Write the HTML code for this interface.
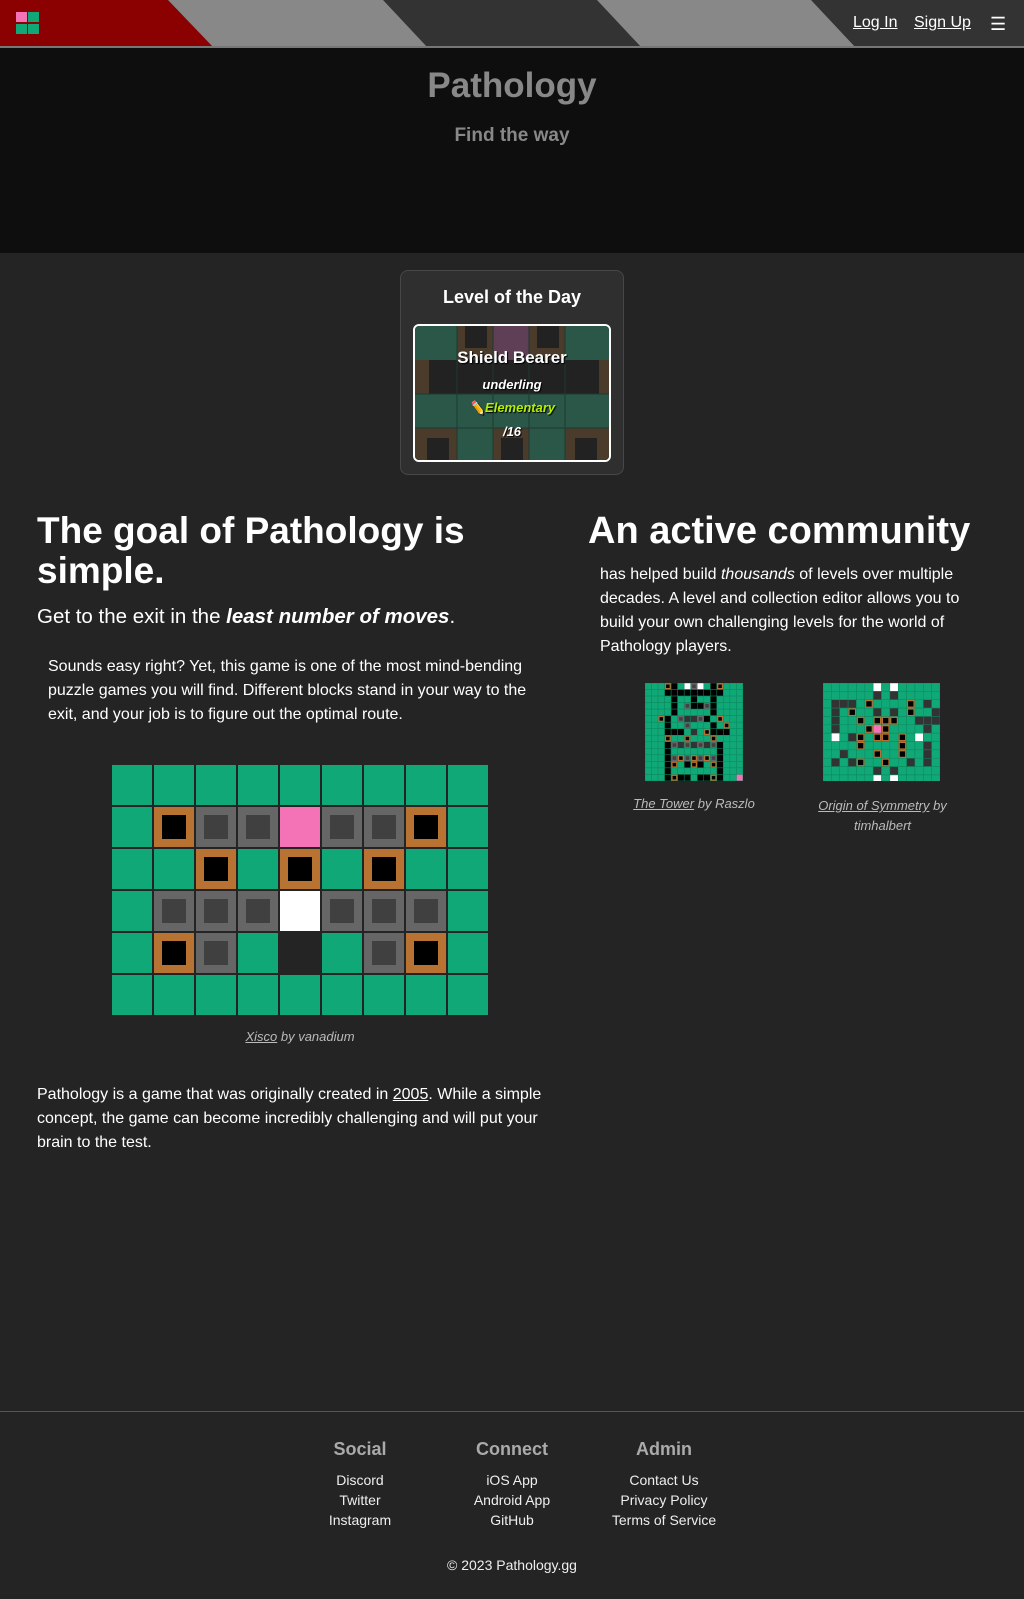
<!DOCTYPE html>
<html><head><meta charset="utf-8">
<style>
*{box-sizing:border-box;margin:0;padding:0}
body{width:1024px;height:1599px;background:#242424;font-family:"Liberation Sans",sans-serif;color:#fff;position:relative;overflow:hidden}
.hdr{position:absolute;left:0;top:0;width:1024px;height:48px;background:#333;border-bottom:2px solid #777;overflow:hidden}
.hero{position:absolute;top:48px;left:0;width:1024px;height:205px;background:#0e0e0e;text-align:center}
.abs{position:absolute}
a{color:inherit}
.card{position:absolute;left:400px;top:270px;width:224px;height:205px;background:#2f2f2f;border:1px solid #474747;border-radius:8px}
.prev{position:absolute;left:12px;top:53px;width:198px;height:138px;border:2px solid #fff;border-radius:6px;overflow:hidden;background:#2a5748}
.t{position:absolute;left:0;width:100%;text-align:center;font-weight:bold;font-style:italic;text-shadow:1px 1px 1px #000}
h2{font-size:37px;font-weight:bold;line-height:40px}
p.b{font-size:16px;line-height:24px}
.grid{position:absolute;left:112px;top:765px;display:grid;grid-template-columns:repeat(9,40px);grid-auto-rows:40px;gap:2px}
.c{width:40px;height:40px}
.g{background:#10a876}
.o{background:#000;border:8px solid #b87333}
.x{background:#404040;border:8px solid #666}
.p{background:#f472b6}
.w{background:#fff}
.e{background:#242424}
.cap{position:absolute;font-size:13px;font-style:italic;color:#bbb;text-align:center}
.ft{position:absolute;top:1411px;left:0;width:1024px;height:188px;border-top:1px solid #555}
.col{position:absolute;width:200px;text-align:center;top:27px}
.col h4{font-size:18px;color:#aaa;margin-bottom:10px}
.col div{font-size:14px;line-height:20px;color:#eee}
</style></head><body>
<div class="hdr">
<svg class="abs" style="left:0;top:0" width="1024" height="48">
<polygon points="0,0 168,0 214,48 0,48" fill="#8b0000"/>
<polygon points="168,0 383,0 428,48 214,48" fill="#888"/>
<polygon points="597,0 811,0 856,48 642,48" fill="#888"/>
<rect x="16" y="12" width="11" height="10" fill="#f472b6"/><rect x="28" y="12" width="11" height="10" fill="#10a876"/>
<rect x="16" y="24" width="11" height="10" fill="#10a876"/><rect x="28" y="24" width="11" height="10" fill="#10a876"/>
</svg>
<a class="abs" style="left:853px;top:14px;font-size:16px;text-decoration:underline">Log In</a>
<a class="abs" style="left:914px;top:14px;font-size:16px;text-decoration:underline">Sign Up</a>
<div class="abs" style="left:990px;top:14px;font-size:18px">☰</div>
</div>
<div class="hero">
<div style="font-size:35px;font-weight:bold;color:#888;margin-top:18px">Pathology</div>
<div style="font-size:19px;font-weight:bold;color:#888;margin-top:19px">Find the way</div>
</div>
<div class="card">
<div style="text-align:center;font-size:18px;font-weight:bold;margin-top:16px">Level of the Day</div>
<div class="prev">
<svg width="198" height="138" style="position:absolute;left:0;top:0">
<rect x="0" y="0" width="198" height="34" fill="#2a5748"/>
<rect x="42" y="0" width="36" height="34" fill="#4b3b2b"/><rect x="50" y="0" width="22" height="22" fill="#222"/>
<rect x="78" y="0" width="36" height="34" fill="#5e3f55"/>
<rect x="114" y="0" width="36" height="34" fill="#4b3b2b"/><rect x="122" y="0" width="22" height="22" fill="#222"/>
<rect x="0" y="34" width="198" height="34" fill="#222"/>
<rect x="0" y="34" width="14" height="34" fill="#4b3b2b"/><rect x="184" y="34" width="14" height="34" fill="#4b3b2b"/>
<rect x="0" y="68" width="198" height="34" fill="#2a5748"/>
<rect x="0" y="102" width="198" height="36" fill="#2a5748"/>
<rect x="0" y="102" width="42" height="36" fill="#4b3b2b"/><rect x="12" y="112" width="22" height="22" fill="#222"/>
<rect x="78" y="102" width="36" height="36" fill="#4b3b2b"/><rect x="86" y="112" width="22" height="22" fill="#222"/>
<rect x="150" y="102" width="48" height="36" fill="#4b3b2b"/><rect x="160" y="112" width="22" height="22" fill="#222"/>
<g stroke="#1e3a30" stroke-width="1"><line x1="42" y1="0" x2="42" y2="138"/><line x1="78" y1="0" x2="78" y2="138"/><line x1="114" y1="0" x2="114" y2="138"/><line x1="150" y1="0" x2="150" y2="138"/><line x1="0" y1="68" x2="198" y2="68"/><line x1="0" y1="102" x2="198" y2="102"/></g>
</svg>
<div class="t" style="top:22px;font-size:17px;font-style:normal">Shield Bearer</div>
<div class="t" style="top:51px;font-size:13px">underling</div>
<div class="t" style="top:74px;font-size:13px;color:#b6f000">✏️Elementary</div>
<div class="t" style="top:98px;font-size:13px">/16</div>
</div>
</div>

<h2 class="abs" style="left:37px;top:511px;width:520px">The goal of Pathology is simple.</h2>
<div class="abs" style="left:37px;top:605px;font-size:20.5px">Get to the exit in the <b><i>least number of moves</i></b>.</div>
<p class="b abs" style="left:48px;top:655px;width:510px">Sounds easy right? Yet, this game is one of the most mind-bending puzzle games you will find. Different blocks stand in your way to the exit, and your job is to figure out the optimal route.</p>
<div class="grid" id="xg"></div>
<div class="cap" style="left:112px;top:1029px;width:376px"><u>Xisco</u> by vanadium</div>
<p class="b abs" style="left:37px;top:1083px;width:530px">Pathology is a game that was originally created in <u>2005</u>. While a simple concept, the game can become incredibly challenging and will put your brain to the test.</p>

<h2 class="abs" style="left:588px;top:511px;width:430px;white-space:nowrap;font-size:38px">An active community</h2>
<p class="b abs" style="left:600px;top:563px;width:390px">has helped build <i>thousands</i> of levels over multiple decades. A level and collection editor allows you to build your own challenging levels for the world of Pathology players.</p>
<svg id="tw" class="abs" style="left:645px;top:683px" width="98" height="98"></svg>
<svg id="sy" class="abs" style="left:823px;top:683px" width="117" height="98"></svg>
<div class="cap" style="left:614px;top:796px;width:160px"><u>The Tower</u> by Raszlo</div>
<div class="cap" style="left:800px;top:796px;width:165px;line-height:20px"><u>Origin of Symmetry</u> by timhalbert</div>

<div class="ft">
<div class="col" style="left:260px"><h4>Social</h4><div>Discord</div><div>Twitter</div><div>Instagram</div></div>
<div class="col" style="left:412px"><h4>Connect</h4><div>iOS App</div><div>Android App</div><div>GitHub</div></div>
<div class="col" style="left:564px"><h4>Admin</h4><div>Contact Us</div><div>Privacy Policy</div><div>Terms of Service</div></div>
<div class="abs" style="left:0;width:1024px;text-align:center;top:145px;font-size:14px;color:#eee">© 2023 Pathology.gg</div>
</div>
<script>
var rows=["ggggggggg","goxxpxxog","ggogogogg","gxxxwxxxg","goxgegxog","ggggggggg"];
var h="";rows.forEach(function(r){for(var i=0;i<r.length;i++)h+='<div class="c '+r[i]+'"></div>';});
document.getElementById("xg").innerHTML=h;
function svgGrid(id,map,cs){var s="",col={g:"#10a876",b:"#000",w:"#fff",x:"#666",d:"#333",p:"#f472b6",o:"#b87333"};
map.forEach(function(r,y){for(var i=0;i<r.length;i++){var c=r[i],X=i*cs,Y=y*cs;
s+='<rect x="'+X+'" y="'+Y+'" width="'+cs+'" height="'+cs+'" fill="'+col[c]+'" stroke="#0c8a60" stroke-width="0.5"/>';
if(c=="o")s+='<rect x="'+(X+1.5)+'" y="'+(Y+1.5)+'" width="'+(cs-3)+'" height="'+(cs-3)+'" fill="#000"/>';
if(c=="x")s+='<rect x="'+(X+1.5)+'" y="'+(Y+1.5)+'" width="'+(cs-3)+'" height="'+(cs-3)+'" fill="#404040"/>';}});
document.getElementById(id).innerHTML=s;}
svgGrid("tw",["gggobgwxwgboggg","gggbbbbbbbbbggg","ggggbggbggbgggg","ggggbgxbbxbgggg","ggggbgggggbgggg","ggobgxddxbgoggg","gggbggxgggbgogg","gggbbbgdgobbbgg","gggoggogggogggg","gggbxdxdxdxbggg","gggbgggggggbggg","gggbxoxoxoxbggg","gggbogbobgobggg","gggbgggggggbggg","gggbobbgbbobggp"],6.53);
svgGrid("sy",["ggggggwgwggggg","ggggggdgdggggg","gdddgoggggogdg","gdgoggdgdgoggd","gdggogoooggddd","gdgggopoggggdg","gwgdogoogogwgg","ggggoggggoggdg","ggdgggoggoggdg","gdgdoggoggdgdg","ggggggdgdggggg","ggggggwgwggggg"],8.36);
</script>
</body></html>
